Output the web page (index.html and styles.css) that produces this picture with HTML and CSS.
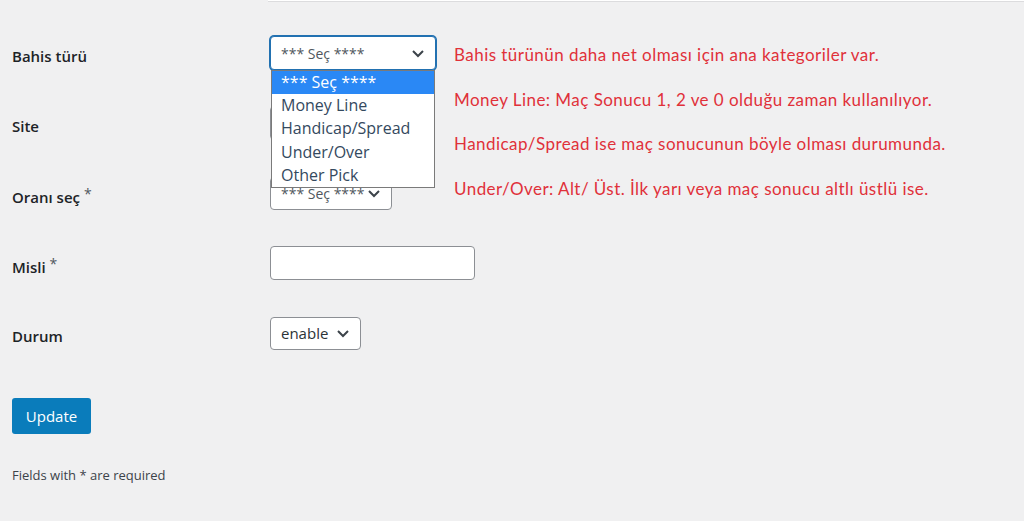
FILE: index.html
```html
<!DOCTYPE html>
<html lang="tr">
<head>
    <meta charset="UTF-8">
    <meta name="viewport" content="width=device-width, initial-scale=1.0">
    <title>Bahis Düzenle</title>
    <link rel="stylesheet" href="styles.css">
</head>
<body>
    <div class="top-box"></div>

    <div class="wrap">
        <!-- Form rows -->
        <div class="form-table">
            <div class="form-row">
                <label class="row-label">Bahis türü</label>
                <div class="field">
                    <div class="select-box focused" style="width: 166px;">
                        <span class="select-text muted">*** Seç ****</span>
                        <svg class="chevron" width="14" height="9" viewBox="0 0 14 9"><path d="M2 2 L7 7 L12 2" fill="none" stroke="#3c434a" stroke-width="2"/></svg>
                        <ul class="dropdown">
                            <li class="active">*** Seç ****</li>
                            <li>Money Line</li>
                            <li>Handicap/Spread</li>
                            <li>Under/Over</li>
                            <li>Other Pick</li>
                        </ul>
                    </div>
                </div>
            </div>

            <!-- site select sits under the open list -->
            <div class="form-row">
                <label class="row-label">Site</label>
                <div class="field">
                    <div class="select-box" style="width: 150px;"></div>
                </div>
            </div>

            <div class="form-row">
                <label class="row-label">Oranı seç <span class="req">*</span></label>
                <div class="field">
                    <div class="select-box small" style="width: 122px;">
                        <span class="select-text muted">*** Seç ****</span>
                        <svg class="chevron" width="14" height="9" viewBox="0 0 14 9"><path d="M2 2 L7 7 L12 2" fill="none" stroke="#3c434a" stroke-width="2"/></svg>
                    </div>
                </div>
            </div>

            <div class="form-row">
                <label class="row-label">Misli <span class="req">*</span></label>
                <div class="field">
                    <input type="text" class="text-input">
                </div>
            </div>

            <div class="form-row">
                <label class="row-label">Durum</label>
                <div class="field">
                    <div class="select-box small" style="width: 91px;">
                        <span class="select-text">enable</span>
                        <svg class="chevron" width="14" height="9" viewBox="0 0 14 9"><path d="M2 2 L7 7 L12 2" fill="none" stroke="#3c434a" stroke-width="2"/></svg>
                    </div>
                </div>
            </div>
        </div>

        <button class="button-primary">Update</button>

        <p class="note">Fields with * are required</p>

        <!-- Annotations -->
        <div class="hints">
            <p>Bahis türünün daha net olması için ana kategoriler var.</p>
            <p>Money Line: Maç Sonucu 1, 2 ve 0 olduğu zaman kullanılıyor.</p>
            <p>Handicap/Spread ise maç sonucunun böyle olması durumunda.</p>
            <p>Under/Over: Alt/ Üst. İlk yarı veya maç sonucu altlı üstlü ise.</p>
        </div>
    </div>
</body>
</html>
```

FILE: styles.css
```css
body {
    margin: 0;
    padding: 0;
    background-color: #f0f0f1;
    font-family: "Open Sans", "Noto Sans", Arial, sans-serif;
    color: #1d2327;
}

.top-box {
    margin-left: 268px;
    height: 1px;
    background: #fff;
    border-bottom: 1px solid #dcdcde;
}

.wrap {
    position: relative;
    padding: 16px 12px 0;
}

.form-row {
    display: grid;
    grid-template-columns: 258px 1fr;
    align-items: center;
    height: 70px;
}

.row-label {
    font-size: 15px;
    font-weight: 600;
    color: #1d2327;
    margin-top: 5px;
}

    .row-label .req {
        font-weight: 400;
        font-size: 14px;
        vertical-align: 4px;
        color: #50575e;
    }

.select-box {
    position: relative;
    display: flex;
    align-items: center;
    box-sizing: border-box;
    height: 34px;
    padding: 0 10px;
    background: #fff;
    border: 1px solid #8c8f94;
    border-radius: 4px;
}

    .select-box.small {
        height: 33px;
    }

    .select-box.focused {
        border-color: #2271b1;
        box-shadow: 0 0 0 1px #2271b1;
        z-index: 2;
    }

.select-text {
    font-size: 15px;
    color: #2c3338;
}

    .select-text.muted {
        font-size: 14px;
        color: #50575e;
    }

.chevron {
    position: absolute;
    right: 10px;
    top: 50%;
    margin-top: -4px;
}

.dropdown {
    position: absolute;
    top: 33px;
    left: 0;
    width: 164px;
    margin: 0;
    padding: 0;
    list-style: none;
    box-sizing: border-box;
    background: #fff;
    border: 1px solid #7a7a7a;
}

    .dropdown li {
        height: 23.2px;
        line-height: 23px;
        padding-left: 9px;
        font-size: 16px;
        color: #34495e;
    }

        .dropdown li.active {
            background: #2a88f5;
            color: #fff;
        }

.text-input {
    box-sizing: border-box;
    width: 205px;
    height: 34px;
    margin: 0;
    background: #fff;
    border: 1px solid #8c8f94;
    border-radius: 4px;
}

.button-primary {
    margin-top: 30px;
    width: 79px;
    height: 36px;
    background-color: #0a7cbb;
    color: #fff;
    font-family: "Open Sans", "Noto Sans", Arial, sans-serif;
    font-size: 15px;
    border: none;
    border-radius: 3px;
    padding: 0;
}

.note {
    margin: 32px 0 0;
    font-size: 13px;
    color: #3c434a;
}

.hints {
    position: absolute;
    left: 454px;
    top: 31px;
    font-family: Lato, "Open Sans", sans-serif;
    font-size: 17px;
    letter-spacing: 0.45px;
    color: #e0313a;
}

    .hints p {
        margin: 0;
        line-height: 44.7px;
        white-space: nowrap;
    }
```
